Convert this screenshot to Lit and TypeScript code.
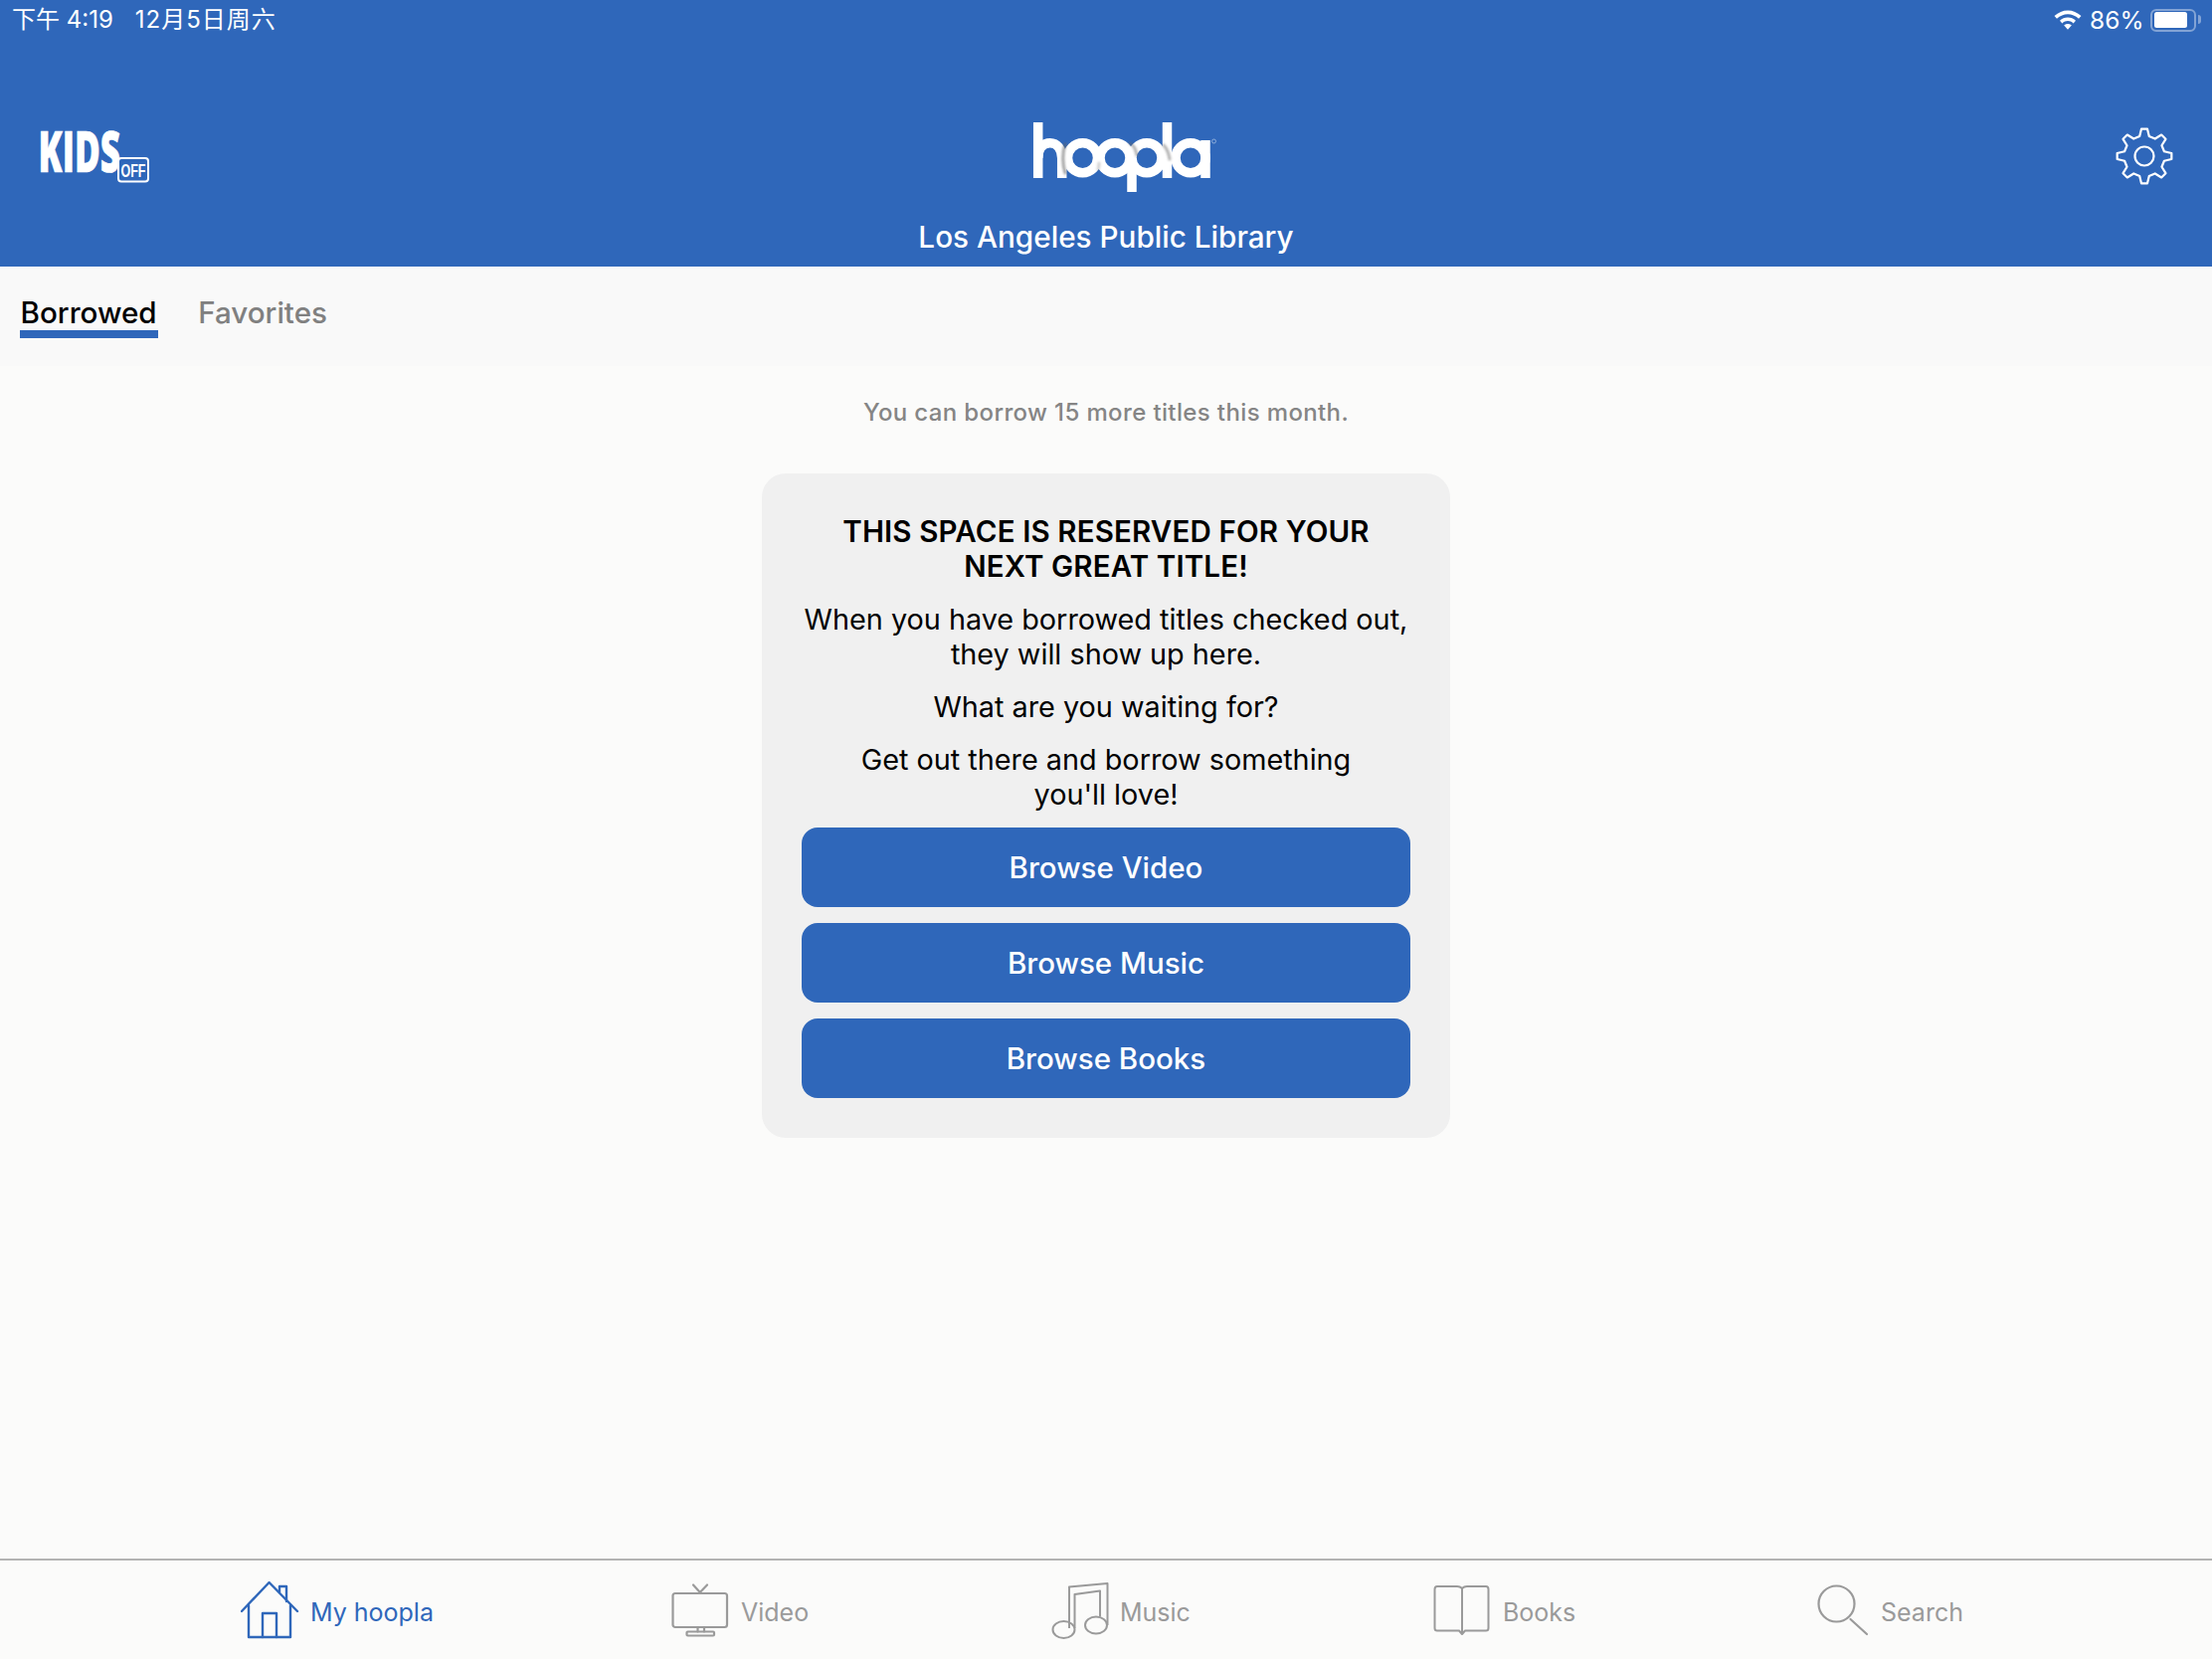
import { LitElement, html, css, svg } from "lit";
import { customElement } from "lit/decorators.js";

const BLUE = "#2f67ba";
const GREY = "#9a9a9a";

const house = svg`<svg width="60" height="60" viewBox="0 0 60 60" fill="none" stroke="${BLUE}" stroke-width="2.4" stroke-linejoin="round" stroke-linecap="round"><path d="M1 30 L28.600 1 L57 30"/><path d="M8 24 V56 H50 V24"/><path d="M22 56 V32 H36 V56"/><path d="M39 11 V5 H46 V20"/></svg>`;
const tv = svg`<svg width="60" height="60" viewBox="0 0 60 60" fill="none" stroke="${GREY}" stroke-width="2.2" stroke-linejoin="round" stroke-linecap="round"><rect x="1.500" y="12" width="54.500" height="34" rx="2.500"/><path d="M22 3.500 L28.800 11 L36 3.500"/><path d="M26.500 46 V50.500 M33 46 V50.500"/><rect x="15.500" y="50.500" width="27.500" height="4" rx="1"/></svg>`;
const note = svg`<svg width="60" height="60" viewBox="0 0 60 60" fill="none" stroke="${GREY}" stroke-width="2" stroke-linejoin="round"><path d="M19 47 V5.500 L57.500 2 V44"/><path d="M24.500 47 V13 L50 9.500 V35.500"/><ellipse cx="13.500" cy="48.500" rx="11" ry="8.500"/><ellipse cx="46" cy="44" rx="11" ry="8.500"/></svg>`;
const book = svg`<svg width="60" height="60" viewBox="0 0 60 60" fill="none" stroke="${GREY}" stroke-width="2" stroke-linejoin="round"><path d="M29 7 C27 5 26 5 24 5 H4 Q1.500 5 1.500 8 V47 Q1.500 49.500 4 49.500 H26 L29 53 L32 49.500 H53 Q55.500 49.500 55.500 47 V8 Q55.500 5 53 5 H34 C32 5 31 5 29 7 Z"/><path d="M29 7 V53"/></svg>`;
const search = svg`<svg width="54" height="60" viewBox="0 0 54 60" fill="none" stroke="${GREY}" stroke-width="2.2" stroke-linecap="round"><circle cx="19.500" cy="22.500" r="18"/><path d="M33.500 38 L50 53"/></svg>`;

const wifi = svg`<svg width="28" height="22" viewBox="0 0 28 22" fill="#fff"><path d="M14 1.500 C19 1.500 23.500 3.500 27.500 7 L25 9.800 C21.700 6.900 18 5.300 14 5.300 C10 5.300 6.300 6.900 3 9.800 L0.500 7 C4.500 3.500 9 1.500 14 1.500 Z"/><path d="M14 8.500 C17 8.500 19.700 9.700 22 11.700 L19.600 14.400 C17.900 12.900 16 12.100 14 12.100 C12 12.100 10.100 12.900 8.400 14.400 L6 11.700 C8.300 9.700 11 8.500 14 8.500 Z"/><path d="M14 15 C15.500 15 16.800 15.500 17.800 16.500 L14 20.800 L10.200 16.500 C11.200 15.500 12.500 15 14 15 Z"/></svg>`;

const gear = (() => {
  const cx = 32, cy = 32, teeth = 8, ro = 27.500, ri = 20.500;
  const pts: string[] = [];
  for (let i = 0; i < teeth; i++) {
    const a = (i * 2 * Math.PI) / teeth - Math.PI / 2;
    const step = (2 * Math.PI) / teeth;
    const list: [number, number][] = [
      [ri, a - step * 0.30],
      [ro, a - step * 0.14],
      [ro, a + step * 0.14],
      [ri, a + step * 0.30],
    ];
    for (const [r, t] of list) pts.push(`${(cx + r * Math.cos(t)).toFixed(2)},${(cy + r * Math.sin(t)).toFixed(2)}`);
  }
  return svg`<svg width="64" height="64" viewBox="0 0 64 64" fill="none" stroke="#fff" stroke-width="2.200" stroke-linejoin="round"><polygon points="${pts.join(" ")}"/><circle cx="32" cy="32" r="9.500"/></svg>`;
})();

const hoopla = svg`<svg width="200" height="85" viewBox="0 0 200 85" fill="none">
  <defs><filter id="soft" x="-50%" y="-50%" width="200%" height="200%"><feGaussianBlur stdDeviation="1.300"/></filter></defs>
  <g stroke="#fff" stroke-width="9.500">
    <path d="M13.700 8 V64"/>
    <path d="M13.700 44 C13.700 32 20 28.700 25.700 28.700 C33 28.700 37.700 35 37.700 44 V64"/>
    <path d="M108 44 V78"/>
    <path d="M143.500 8 V64"/>
    <path d="M182 26 V64"/>
    <circle cx="58.500" cy="43.700" r="15"/>
    <circle cx="91" cy="43.700" r="15"/>
    <circle cx="123" cy="43.700" r="15"/>
    <circle cx="167" cy="43.700" r="15"/>
  </g>
  <g stroke="#666" stroke-width="3" fill="none" filter="url(#soft)" stroke-linecap="round">
    <path d="M41 30 C38 38 38 50 41 59" stroke-opacity="0.6"/>
    <path d="M106 29 C110 31 112 35 113 41" stroke-opacity="0.5"/>
    <path d="M140 31 C143 34 145 38 146 45" stroke-opacity="0.5"/>
    <path d="M74 55 C75 53 75 51 75 49" stroke-opacity="0.3"/>
  </g>
  <circle cx="190.500" cy="27" r="2" stroke="#fff" stroke-width="0.600" stroke-opacity="0.7"/>
</svg>`;

const kids = svg`<svg width="130" height="65" viewBox="0 0 130 65">
  <text x="8.500" y="47.500" font-family="'Open Sans','Liberation Sans',sans-serif" font-weight="800" font-size="56" fill="#fff" stroke="#fff" stroke-width="0.700" textLength="82.500" lengthAdjust="spacingAndGlyphs">KIDS</text>
  <rect x="89" y="34" width="30" height="23.500" rx="3" fill="${BLUE}" stroke="#fff" stroke-width="2"/>
  <text x="91.500" y="52.500" font-family="'Liberation Sans',sans-serif" font-weight="700" font-size="18" fill="#fff" textLength="25" lengthAdjust="spacingAndGlyphs">OFF</text>
</svg>`;

@customElement("app-root")
export class AppRoot extends LitElement {
  static styles = css`
    :host {
      --blue: #2f67ba;
      display: flex;
      flex-direction: column;
      width: 2224px;
      height: 1668px;
      overflow: hidden;
      background: #fbfbfa;
      font-family: Inter, "Noto Sans CJK SC", "Liberation Sans", sans-serif;
      color: #000;
    }
    header {
      height: 268px;
      flex: none;
      background: var(--blue);
      color: #fff;
      display: flex;
      flex-direction: column;
    }
    .status {
      height: 40px;
      display: flex;
      align-items: center;
      justify-content: space-between;
      padding: 0 12px;
      font-size: 24px;
      line-height: 40px;
    }
    .status .left { display: flex; gap: 22px; }
    .date { letter-spacing: 1px; }
    .status .right { display: flex; align-items: center; }
    .status .right svg { margin-right: 8px; }
    .pct { font-size: 24.500px; margin-right: 6px; }
    .battery {
      position: relative;
      width: 46.500px;
      height: 23px;
      box-sizing: border-box;
      border: 2px solid rgba(255, 255, 255, 0.4);
      border-radius: 6px;
      padding: 1.500px 2px;
      margin-right: 4px;
    }
    .battery i {
      display: block;
      width: 33px;
      height: 16px;
      background: #fff;
      border-radius: 2.500px;
    }
    .battery::after {
      content: "";
      position: absolute;
      right: -7px;
      top: 4.500px;
      width: 3px;
      height: 9px;
      background: rgba(255, 255, 255, 0.4);
      border-radius: 0 3px 3px 0;
    }
    .brand {
      height: 228px;
      display: grid;
      grid-template-columns: 1fr auto 1fr;
      padding: 0 30px;
    }
    .kids { margin-top: 85px; height: 65px; }
    .mid {
      display: flex;
      flex-direction: column;
      align-items: center;
    }
    .logo { margin: 75px 0 0 36px; height: 85px; }
    .lib {
      margin-top: 19px;
      font-size: 29.700px;
      line-height: 38px;
      font-weight: 500;
      white-space: nowrap;
    }
    .gear { justify-self: end; margin: 85px 6px 0 0; height: 64px; }
    nav.tabs {
      height: 100px;
      flex: none;
      background: #f9f9f9;
      display: flex;
      padding-left: 20px;
      gap: 40px;
      font-size: 29.600px;
      font-weight: 500;
    }
    .tab {
      height: 72px;
      padding-top: 28px;
      box-sizing: border-box;
      line-height: 36px;
      color: #808080;
    }
    .tab.on {
      padding-left: 0.500px;
      padding-right: 1.500px;
      color: #000;
      border-bottom: 8px solid var(--blue);
    }
    main {
      flex: 1;
      display: flex;
      flex-direction: column;
      align-items: center;
    }
    .quota {
      margin-top: 32px;
      font-size: 24px;
      line-height: 30px;
      font-weight: 500;
      letter-spacing: 0.370px;
      color: #858585;
    }
    .card {
      margin-top: 46px;
      width: 692px;
      box-sizing: border-box;
      height: 668px;
      padding: 41px 40px 40px;
      border-radius: 24px;
      background: #f0f0f0;
      text-align: center;
      display: flex;
      flex-direction: column;
      white-space: nowrap;
    }
    h2 {
      margin: 0;
      font-size: 29.500px;
      line-height: 35px;
      font-weight: 600;
      letter-spacing: 0.130px;
    }
    p {
      margin: 18px 0 0;
      font-size: 28.800px;
      line-height: 35px;
      font-weight: 400;
    }
    .btns {
      margin-top: 16px;
      display: flex;
      flex-direction: column;
      gap: 16px;
    }
    .btn {
      height: 80px;
      border-radius: 16px;
      background: var(--blue);
      color: #fff;
      font-size: 29.500px;
      font-weight: 500;
      line-height: 80px;
    }
    footer {
      height: 101px;
      flex: none;
      border-top: 2px solid #b3b3b3;
      box-sizing: border-box;
      background: #fbfbfa;
      display: grid;
      grid-template-columns: 433px 381px 385px 386px auto;
      padding-left: 242px;
      align-items: center;
      font-size: 25px;
      color: #9a9a9a;
    }
    .item { display: flex; align-items: center; gap: 10px; margin-top: 2px; }
    .item span { padding-top: 2px; }
    .item.on { color: var(--blue); }
    .item svg { display: block; }
  `;

  render() {
    return html`
      <header>
        <div class="status">
          <div class="left"><span>下午 4:19</span><span class="date">12月5日周六</span></div>
          <div class="right">${wifi}<span class="pct">86%</span><div class="battery"><i></i></div></div>
        </div>
        <div class="brand">
          <div class="kids">${kids}</div>
          <div class="mid">
            <div class="logo">${hoopla}</div>
            <div class="lib">Los Angeles Public Library</div>
          </div>
          <div class="gear">${gear}</div>
        </div>
      </header>
      <nav class="tabs">
        <div class="tab on">Borrowed</div>
        <div class="tab">Favorites</div>
      </nav>
      <main>
        <div class="quota">You can borrow 15 more titles this month.</div>
        <section class="card">
          <h2>THIS SPACE IS RESERVED FOR YOUR<br />NEXT GREAT TITLE!</h2>
          <p>When you have borrowed titles checked out,<br />they will show up here.</p>
          <p>What are you waiting for?</p>
          <p>Get out there and borrow something<br />you'll love!</p>
          <div class="btns">
            <div class="btn">Browse Video</div>
            <div class="btn">Browse Music</div>
            <div class="btn">Browse Books</div>
          </div>
        </section>
      </main>
      <footer>
        <div class="item on">${house}<span>My hoopla</span></div>
        <div class="item">${tv}<span>Video</span></div>
        <div class="item">${note}<span>Music</span></div>
        <div class="item">${book}<span>Books</span></div>
        <div class="item">${search}<span>Search</span></div>
      </footer>
    `;
  }
}
